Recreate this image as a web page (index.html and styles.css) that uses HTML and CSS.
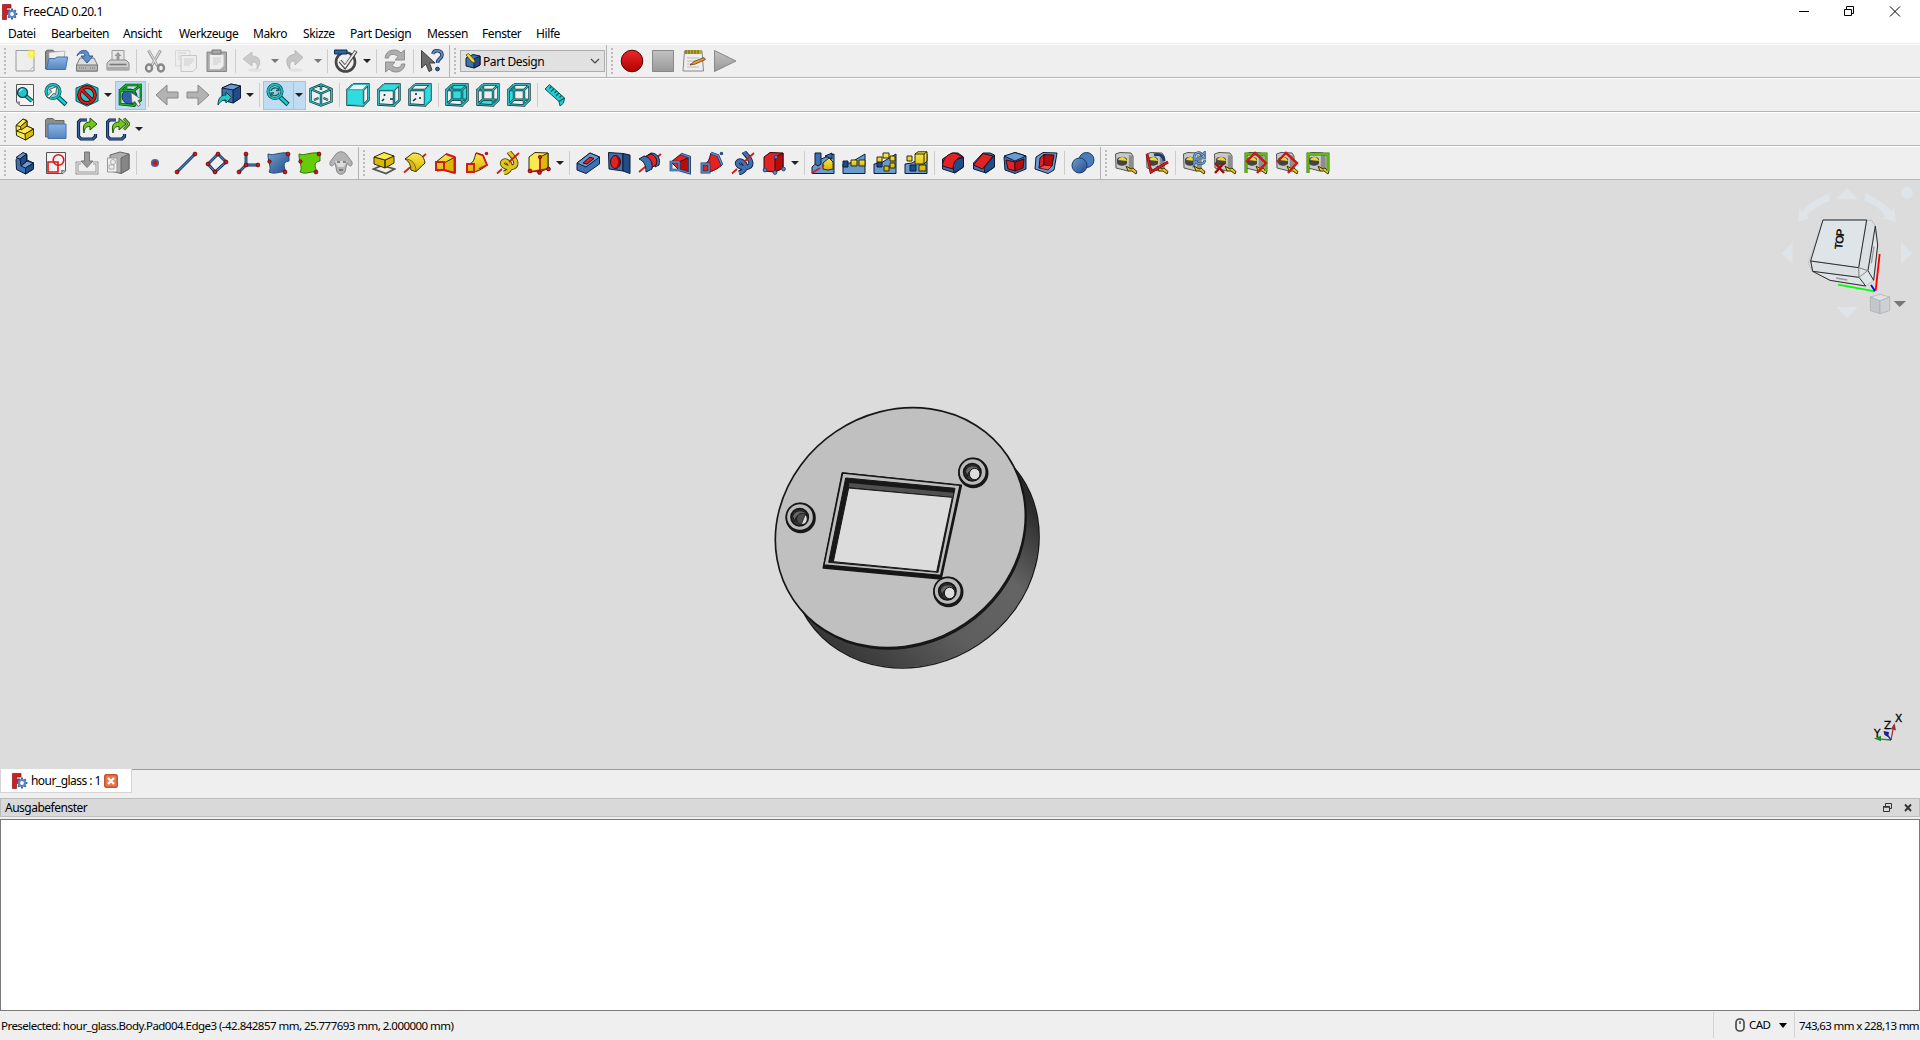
FILE: index.html
```html
<!DOCTYPE html>
<html lang="de">
<head>
<meta charset="utf-8">
<title>FreeCAD 0.20.1</title>
<link rel="stylesheet" href="styles.css">
</head>
<body>
<svg class="defs" width="0" height="0">
<defs>
<linearGradient id="gside" x1="0" y1="1" x2="1" y2="0"><stop offset="0" stop-color="#222"/><stop offset=".2" stop-color="#3c3c3c"/><stop offset=".42" stop-color="#5e5e5e"/><stop offset=".62" stop-color="#646464"/><stop offset=".8" stop-color="#2b2b2b"/><stop offset="1" stop-color="#111"/></linearGradient>
<linearGradient id="gy" x1="0" y1="0" x2="0" y2="1"><stop offset="0" stop-color="#fce94f"/><stop offset="1" stop-color="#d5b400"/></linearGradient>
<linearGradient id="gb" x1="0" y1="0" x2="1" y2="1"><stop offset="0" stop-color="#729fcf"/><stop offset="1" stop-color="#204a87"/></linearGradient>
<linearGradient id="gr" x1="0" y1="0" x2="0" y2="1"><stop offset="0" stop-color="#ef2929"/><stop offset="1" stop-color="#b00000"/></linearGradient>
<linearGradient id="gg" x1="0" y1="0" x2="0" y2="1"><stop offset="0" stop-color="#c2c2c2"/><stop offset="1" stop-color="#999"/></linearGradient>
<linearGradient id="gf" x1="0" y1="0" x2="0" y2="1"><stop offset="0" stop-color="#8db5e2"/><stop offset="1" stop-color="#5585bf"/></linearGradient>
<radialGradient id="glow"><stop offset="0" stop-color="#fffbd0"/><stop offset=".4" stop-color="#fff23c"/><stop offset="1" stop-color="#fff23c" stop-opacity="0"/></radialGradient>
</defs>
<symbol id="logo" viewBox="0 0 16 16"><path d="M.5.5H9V4H4.500V6H8V9.500H4.500V15.500H.5z" fill="#d41c22" stroke="#7c1518" stroke-width=".7"/><path d="M10 4.500v11M4.700 10h10.600M6.200 6.200l7.600 7.600M13.800 6.200l-7.600 7.600" stroke="#365f9c" stroke-width="2"/><circle cx="10" cy="10" r="3" fill="#fff" stroke="#5a86c0" stroke-width="2.200"/></symbol>
<symbol id="new" viewBox="0 0 24 24"><path d="M3 1.500H21V22H3z" fill="#eee" stroke="#999"/><path d="M16 22l5-5" stroke="#bbb"/><circle cx="18.500" cy="5" r="5.500" fill="url(#glow)"/></symbol>
<symbol id="open" viewBox="0 0 24 24"><path d="M1.500 20V2.500L3 1.200H9L10.500 3H20V20z" fill="#8b8d88" stroke="#666"/><path d="M5 3.500L21 2 20 10H5z" fill="#f0f0f0" stroke="#aaa" stroke-width=".7"/><path d="M5 9.500H11L13 8H23.700L21.500 20.500H2.500z" fill="url(#gf)" stroke="#4273ae"/></symbol>
<symbol id="save" viewBox="0 0 24 24"><path d="M5 9H19L22.500 16V22H1.500V16z" fill="#ddd" stroke="#777"/><path d="M1.500 16H22.500V22H1.500z" fill="#b5b5b5" stroke="#777"/><path d="M4 19H12M15 19H20" stroke="#777" stroke-dasharray="1 1"/><path d="M2 7C4 0 14-1 14 7H18L12 14 6 7H10C10 3 5 3 2 7z" fill="#5e8fc9" stroke="#2e5c97"/></symbol>
<symbol id="print" viewBox="0 0 24 24"><path d="M6 1.500H18V12H6z" fill="#e8e8e8" stroke="#999"/><path d="M12 3L15.500 7H13.500V11H10.500V7H8.500z" fill="#999"/><path d="M4 11H20L23 14V21H1V14z" fill="#d0d0d0" stroke="#888"/><path d="M3.500 15.500H20.500" stroke="#777" stroke-width="1.600"/><path d="M1 18H23V21H1z" fill="#aaa"/></symbol>
<symbol id="cut" viewBox="0 0 24 24"><path d="M5.500 1.500L14.500 17M17.500 1.500L8.500 17" stroke="#999" stroke-width="2.800"/><path d="M6 2L14 16M17 2L9 16" stroke="#ddd" stroke-width="1.200"/><ellipse cx="6" cy="19" rx="3" ry="3.500" fill="none" stroke="#888" stroke-width="2.400"/><ellipse cx="18" cy="19" rx="3" ry="3.500" fill="none" stroke="#888" stroke-width="2.400"/></symbol>
<symbol id="copy" viewBox="0 0 24 24"><path d="M1.500 1.500H16V17H1.500z" fill="#eee" stroke="#d8d8d8"/><path d="M7 6.500H22.500V19L19 22.500H7z" fill="#eee" stroke="#c6c6c6"/><path d="M4 4H12M4 7H6M4 10H6M10 10H20M10 12H20M10 14H18M10 16H16" stroke="#d9d9d9" stroke-width="1.300"/></symbol>
<symbol id="paste" viewBox="0 0 24 24"><path d="M2 3H21.500V22.500H2z" fill="#aaa" stroke="#888"/><path d="M4.500 5.500H19V17L15 20.500H4.500z" fill="#eee" stroke="#bbb"/><path d="M7 1H16V5H7z" fill="#aaa" stroke="#777"/><path d="M8 9H16M8 11H16M8 13H16M8 15H13" stroke="#ccc"/></symbol>
<symbol id="undo" viewBox="0 0 24 24"><ellipse cx="13" cy="21" rx="7" ry="1.800" fill="#e2e2e2"/><path d="M1 10L10 3V7C18 7 20 13 15 20 16 14 14 13 10 13V17z" fill="#cbcbcb" stroke="#c0c0c0"/></symbol>
<symbol id="redo" viewBox="0 0 24 24"><g transform="matrix(-1 0 0 1 24 0)"><ellipse cx="13" cy="21" rx="7" ry="1.800" fill="#e2e2e2"/><path d="M6 8.500L14 1.500V5.500C22 5.500 25 13 19 20 20 13 18 12 14 12V16z" fill="#c6c6c6" stroke="#b6b6b6"/></g></symbol>
<symbol id="check" viewBox="0 0 24 24"><circle cx="11.500" cy="13" r="9.500" fill="none" stroke="#444" stroke-width="2.600"/><path d="M.5 1H13V5H.5z" fill="#2d62a5" stroke="#122c50"/><path d="M6 12L11 18 22 2" fill="none" stroke="#444" stroke-width="3.600"/><path d="M6 12L11 17.500 21.500 2.500" fill="none" stroke="#eee" stroke-width="1.800"/></symbol>
<symbol id="refresh" viewBox="0 0 24 24"><g fill="#aeaeae" stroke="#8e8e8e"><path d="M2 9C3 0 14-1 18 4L21.500 1V11H12L15 7.500C11 4 6 5 5.500 9z"/><path d="M22 15C21 24 10 25 6 20L2.500 23V13H12L9 16.500C13 20 18 19 18.500 15z"/></g></symbol>
<symbol id="whats" viewBox="0 0 24 24"><path d="M1.500 1.500V19L6 15 9 22.500 12 21 9.500 14H15z" fill="#6a6c69" stroke="#3f3f3f"/><path d="M13 5C14 0 22 1 22 6 22 10 17.500 9 17.500 14" fill="none" stroke="#203a60" stroke-width="3.600"/><path d="M13 5C14 0 22 1 22 6 22 10 17.500 9 17.500 14" fill="none" stroke="#5e8ac0" stroke-width="1.800"/><circle cx="17.500" cy="20" r="1.900" fill="#3465a4" stroke="#203a60"/></symbol>
<symbol id="pd" viewBox="0 0 16 16"><path class="bl" d="M1 5L8 1.500 15 3V12L9 15 1 13z"/><path class="bd" d="M9 6L15 3V12L9 15z"/><path d="M1 2L3.500 .5 9.500 7 10 10 7 9z" fill="#f2dc42" stroke="#554800" stroke-width=".8"/></symbol>
<symbol id="rec" viewBox="0 0 24 24"><circle cx="12" cy="12" r="10.800" fill="url(#gr)" stroke="#4c0505"/></symbol>
<symbol id="stop" viewBox="0 0 24 24"><path d="M1.500 1.500H22.500V22.500H1.500z" fill="url(#gg)" stroke="#888"/></symbol>
<symbol id="edit" viewBox="0 0 24 24"><path d="M2.500 2H20L21.500 22H1z" fill="#eee" stroke="#888"/><path d="M3 1H20V5H3z" fill="#b8a83a"/><path d="M4 1V5M7 1V5M10 1V5M13 1V5M16 1V5" stroke="#675c14"/><path d="M5 9H17M5 12H16M5 15H9M5 18H17" stroke="#bbb"/><path d="M8 16L12 12.500 22 8.500 23.500 10.500 13.500 15z" fill="#e79a3c" stroke="#6b3c06" stroke-width=".8"/></symbol>
<symbol id="play" viewBox="0 0 24 24"><path d="M1.500 1.500V22.500L23 12z" fill="url(#gg)" stroke="#888"/></symbol>
<symbol id="fit" viewBox="0 0 24 24"><path d="M3.500 1.500H20.500V22.500H7L3.500 19z" fill="#f4f4f4" stroke="#555"/><path d="M3.500 18.500H7V22.500z" fill="#888"/><path d="M13 13L19 18" stroke="#043f42" stroke-width="4"/><path d="M13 13L19 18" stroke="#16d0d2" stroke-width="2.200"/><circle cx="9.500" cy="9.500" r="5" fill="#24c2cc" stroke="#043f42" stroke-width="1.200"/><path d="M6.500 9a3 3 0 0 1 3-2.500" fill="none" stroke="#caffff"/></symbol>
<symbol id="mag" viewBox="0 0 24 24"><path d="M13 13L22 21.500" stroke="#043f42" stroke-width="4.500"/><path d="M13 13L21.500 21" stroke="#16d0d2" stroke-width="2.600"/><circle cx="9" cy="8.500" r="7" fill="#8fd3d9" stroke="#043f42" stroke-width="3"/><circle cx="9" cy="8.500" r="7" fill="none" stroke="#17bdc1" stroke-width="1.800"/></symbol>
<symbol id="fitsel" viewBox="0 0 24 24"><use href="#mag"/><path d="M3 13.500L8 8.500 5.500 6.500 13 3.500 11.500 11.500 9.800 10 5 15z" fill="#fff" stroke="#444" stroke-width=".8"/></symbol>
<symbol id="sync" viewBox="0 0 24 24"><use href="#mag"/><path d="M5 8C5.500 4.500 11 4 12.500 6.500M13 4V7.500H10M13 9.500C12.500 13 7 13.500 5.500 11M5 13.500V10H8" fill="none" stroke="#155c61" stroke-width="1.300"/></symbol>
<symbol id="style" viewBox="0 0 24 24"><path d="M12 .8L23 5V18L12 23.200 1 18V5z" fill="#22c5c8" stroke="#056064"/><circle cx="12" cy="12" r="8" fill="none" stroke="#4a0606" stroke-width="3.800"/><path d="M6.500 6.500L17.500 17.500" stroke="#4a0606" stroke-width="3.600"/><circle cx="12" cy="12" r="8" fill="none" stroke="#d81b1b" stroke-width="2.200"/><path d="M6.500 6.500L17.500 17.500" stroke="#d81b1b" stroke-width="2"/></symbol>
<symbol id="bsel" viewBox="0 0 24 24"><circle cx="11.500" cy="13.500" r="7.500" fill="#2f60a8" stroke="#13305c"/><path d="M2 7.500H16V22.500L2 21zM2 7.500L8 2H23L16 7.500M23 2V17L16 22.500M8 2V7" fill="none" stroke="#063b06" stroke-width="2.600"/><path d="M2 7.500H16V22.500L2 21zM2 7.500L8 2H23L16 7.500M23 2V17L16 22.500M8 2V7" fill="none" stroke="#18b326" stroke-width="1.400"/><path d="M13 9.500L14 20 17 18.500 20 23.500 22.500 22 20 17.500 23 16z" fill="#eee" stroke="#666" stroke-width=".8"/></symbol>
<symbol id="back" viewBox="0 0 24 24"><path d="M1 12L12 2V9H23V15H12V22z" fill="#b3b3b3" stroke="#888"/></symbol>
<symbol id="fwd" viewBox="0 0 24 24"><path d="M23 12L12 2V9H1V15H12V22z" fill="#b3b3b3" stroke="#888"/></symbol>
<symbol id="link" viewBox="0 0 24 24"><path class="bl" d="M5 5L14 1 23.500 3V15L16 20 5 17z"/><path class="bd" d="M16 7L23.500 3V15L16 20z"/><path class="bh" d="M5 5L14 1 23.500 3 16 7z"/><path d="M1 22C1 14 5 12 9 12V9L14.500 14.500 9 20V17C5 17 4 18 1 22z" fill="#27c6cb" stroke="#06474a"/></symbol>
<path id="fr" d="M1.500 7H17V22.500L1.500 21.500zM7 1.500H22.500V17L17 22.500M1.500 7L7 1.500M17 7L22.500 1.500"/>
<path id="hid" d="M7 1.500V16.500L22.500 17M7 16.500L1.500 21.500"/>
<path id="isop" d="M12 1.500L22.500 6V18.500L12 22.500 1.500 18.500V6zM1.500 6L12 10.500 22.500 6M12 10.500V22.500M12 1.500V7M5 17L9.500 15M19 17L14.500 15"/>
<symbol id="iso" viewBox="0 0 24 24"><g class="k"><use href="#isop"/></g><g class="cy"><use href="#isop"/></g></symbol>
<symbol id="vfront" viewBox="0 0 24 24"><g class="k"><use href="#fr"/></g><path class="c" d="M1.500 7H17V22.500L1.500 21.500z"/><path fill="#eafafa" d="M7 2H21L16.500 6.500H3z"/><g class="cy"><use href="#fr"/></g></symbol>
<symbol id="vtop" viewBox="0 0 24 24"><g class="k"><use href="#fr"/><path d="M5 18L7 16M7.500 11V13M13 16H16" stroke-width="1.600"/></g><path class="c" d="M1.500 7L7 1.500H22.500L17 7z"/><g class="cy"><use href="#fr"/></g></symbol>
<symbol id="vright" viewBox="0 0 24 24"><g class="k"><use href="#fr"/><path d="M5 18L8 15.500M8 10V12M12 16V14" stroke-width="1.600"/></g><path class="c" d="M17 7L22.500 1.500V17L17 22.500z"/><g class="cy"><use href="#fr"/></g></symbol>
<symbol id="vrear" viewBox="0 0 24 24"><path class="c" d="M7 1.500H22.500V17L7 16.500z"/><g class="k"><use href="#fr"/><use href="#hid"/></g><g class="cy"><use href="#fr"/><use href="#hid"/></g></symbol>
<symbol id="vbottom" viewBox="0 0 24 24"><path class="c" d="M7 16.500H22.500L17 22.500 1.500 21.500z"/><g class="k"><use href="#fr"/><use href="#hid"/></g><g class="cy"><use href="#fr"/><use href="#hid"/></g></symbol>
<symbol id="vleft" viewBox="0 0 24 24"><path class="c" d="M1.500 7L7 1.500V16.500L1.500 21.500z"/><g class="k"><use href="#fr"/><use href="#hid"/></g><g class="cy"><use href="#fr"/><use href="#hid"/></g></symbol>
<symbol id="ruler" viewBox="0 0 24 24"><path d="M1 6L5.500 1.500 20.500 15 19.500 20 16 23 15 18.500z" fill="#27cbd0" stroke="#06595c"/><path d="M15 18.500L20.500 15M7.500 3.500L5.500 5.500M10 5.500L7 8.500M12.500 8L10.500 10M15 10L12 13M17.500 12.500L15.500 14.500" stroke="#06595c" stroke-width="1.200"/></symbol>
<path id="part" d="M3 8.500L10 2 14 3.500V9L20.500 12V18L12.500 23 3.500 18.500z"/>
<symbol id="ypart" viewBox="0 0 24 24"><use href="#part" class="yl"/><path class="yl" d="M3 8.500L10 2 14 4 7.500 9.500zM3.500 14L14 9 20.500 12 12 17z"/><path class="yd" d="M12 17L20.500 12V18L12.500 23zM7.500 9.500L14 4V9L8 13z"/></symbol>
<symbol id="bpart" viewBox="0 0 24 24"><use href="#part" class="bl"/><path class="bh" d="M3 6.500L10 1.500 13.500 3 7 8zM8 15L14 10 20.500 12 12.500 17z"/><path class="bd" d="M12.500 17L20.500 12V18L12.500 23zM7 8L13.500 3V10L8 15z"/></symbol>
<symbol id="group" viewBox="0 0 24 24"><path d="M1.500 20V3L3 1.500H9L11 3.500H20V20z" fill="#8b8d88" stroke="#666"/><path d="M4 7H22V21.500H4z" fill="url(#gf)" stroke="#4273ae"/></symbol>
<symbol id="ln" viewBox="0 0 24 24"><path d="M12 3H5.500L3.500 5V19.500L6 22H18L20.500 19.500V17" fill="none" stroke="#0b1f3c" stroke-width="3.200"/><path d="M12 3H5.500L3.500 5V19.500L6 22H18L20.500 19.500V17" fill="none" stroke="#3465a4" stroke-width="1.500"/><path class="gn" d="M9 16C7 8 10 5 15 5V1L22 7 15 13V9.500C11 9.500 9.500 11 9 16z"/></symbol>
<symbol id="lng" viewBox="0 0 24 24"><use href="#ln" x="-2"/><path d="M18 1.500L23 7 18 12.500" fill="none" stroke="#3c6d10" stroke-width="3"/><path d="M18 1.500L23 7 18 12.500" fill="none" stroke="#94d14f"/></symbol>
<symbol id="sketch" viewBox="0 0 24 24"><path d="M2.500 1.500H21.500V20L19 22.500H2.500z" fill="#f2f2f2" stroke="#555"/><path d="M17 22.500V19H21.500z" fill="#888"/><path d="M4 11H14V21H4z" fill="none" stroke="#e01515" stroke-width="1.600"/><circle cx="14.500" cy="9" r="5.300" fill="none" stroke="#e01515" stroke-width="1.600"/></symbol>
<symbol id="import" viewBox="0 0 24 24"><path d="M6 12H2V22H22V12H18" fill="none" stroke="#999" stroke-width="3"/><path d="M6 12H2V22H22V12H18" fill="none" stroke="#eee" stroke-width="1"/><path d="M9.500 1H14.500V10H18L12 16.500 6 10H9.500z" fill="#999" stroke="#777"/></symbol>
<symbol id="mapsk" viewBox="0 0 24 24"><path d="M4 4L14 1 23 3V18L15 22.500 4 20z" fill="#b0b0b0" stroke="#666"/><path d="M15 7L23 3V18L15 22.500z" fill="#868686" stroke="#666"/><path d="M1.500 7H11V21H1.500z" fill="#eee" stroke="#999"/><circle cx="7" cy="11" r="2.500" fill="none" stroke="#aaa"/><path d="M3 14H8V18H3z" fill="none" stroke="#aaa"/></symbol>
<symbol id="point" viewBox="0 0 24 24"><circle cx="12" cy="12" r="3.300" fill="#d01515" stroke="#3d6cab" stroke-width="1.600"/></symbol>
<symbol id="line" viewBox="0 0 24 24"><path class="e1" d="M3 21L21 3"/><path class="e2" d="M3 21L21 3"/><g class="d"><circle cx="3" cy="21" r="1.900"/><circle cx="21" cy="3" r="1.900"/></g></symbol>
<symbol id="plane" viewBox="0 0 24 24"><path class="e1" d="M13 3L21 11 10 21 3 13z"/><path class="e2" d="M13 3L21 11 10 21 3 13z"/><g class="d"><circle cx="13" cy="3" r="1.900"/><circle cx="21" cy="11" r="1.900"/><circle cx="10" cy="21" r="1.900"/><circle cx="3" cy="13" r="1.900"/></g></symbol>
<symbol id="cs" viewBox="0 0 24 24"><path class="e1" d="M10 3V14H22M10 14L3 21"/><path class="e2" d="M10 3V14H22M10 14L3 21"/><g class="d"><circle cx="10" cy="3" r="1.900"/><circle cx="10" cy="14" r="1.900"/><circle cx="22" cy="14" r="1.900"/><circle cx="3" cy="21" r="1.900"/></g></symbol>
<path id="bind" d="M1 3C8 5 10 1 22 2L22 10C15 11 17 16 19 21 12 20 8 24 2 21 5 16 1 13 1 3z"/>
<g id="bdots" class="d"><circle cx="21" cy="3" r="1.900"/><circle cx="2.500" cy="10.500" r="1.700"/><circle cx="18" cy="21" r="1.900"/></g>
<symbol id="bb" viewBox="0 0 24 24"><use href="#bind" fill="url(#gb)" stroke="#234b80"/><use href="#bdots"/></symbol>
<symbol id="gbind" viewBox="0 0 24 24"><use href="#bind" fill="#66cc0a" stroke="#32740a"/><use href="#bdots"/></symbol>
<symbol id="clone" viewBox="0 0 24 24"><path d="M7 3C10 0 14 0 17 3L23 11C24 16 20 16 18 12L16 21C14 24 10 24 8 21L6 12C4 16 0 16 1 11z" fill="#b4b4b4" stroke="#888"/><path d="M6 10H18L15 16H9z" fill="#dcdcdc"/><path d="M8 11h3M14 11h3M10 19h4" stroke="#666" stroke-width="1.500"/></symbol>
<symbol id="pad" viewBox="0 0 24 24"><path d="M1.500 18L10 14.500 22.500 18 14 22.500z" fill="#eee" stroke="#555" stroke-width="1.800"/><path class="yd" d="M2 6V13L13 17V9zM13 9L22 5V12L13 17z"/><path class="yl" d="M2 6L12 1.500 22 5 13 9z"/></symbol>
<symbol id="rev" viewBox="0 0 24 24"><path d="M1 21.500L23 3" stroke="#d01c1c" stroke-width="1.800"/><path class="yy" d="M2 8L10 2C17 2 21 5 22 12L13 20.500 8 19C8 14 6 10 2 8z"/><path d="M2 8C9 8 13 13 13 20.500L8 19C8 14 6 10 2 8z" fill="#d9ba0c" stroke="#302b00" stroke-width=".6"/></symbol>
<symbol id="loft" viewBox="0 0 24 24"><path class="yy" d="M2 11L12 3 21 6V22L12 19 3 20z"/><path class="yd" d="M10 12L21 6V22L10 19z"/><path d="M12 3L20.500 6V22L10 19M2 11H10V19H2z" fill="none" stroke="#d41616" stroke-width="1.900"/></symbol>
<symbol id="pipe" viewBox="0 0 24 24"><path class="yy" d="M2 13C9 13 9 8 11 2L18 4 22 14C16 19 13 20 9 21H2z"/><path d="M11 2L18 4.500 22 14 14 18M2 13H9V21H2z" fill="none" stroke="#d41616" stroke-width="1.800"/><circle cx="21.500" cy="2.500" r="1.700" fill="#c01010"/></symbol>
<path id="hx" d="M8 22C15 20 16 14 12 11 8 8 4 12 8 15 13 18 20 17 20 12 19 6 14 3 13 1"/>
<symbol id="helix" viewBox="0 0 24 24"><g fill="none"><use href="#hx" stroke="#453a00" stroke-width="5"/><use href="#hx" stroke="#e1c51b" stroke-width="3.400"/></g><path d="M1 22.500L6 18M13 11L23 2" stroke="#d01c1c" stroke-width="1.800"/></symbol>
<symbol id="ybox" viewBox="0 0 24 24"><path class="yl" d="M2 6L8 1.500 21 2V17L13 21 2 20z"/><path class="yd" d="M13 6L21 2V17L13 21z"/><path d="M13 6V19L3 21M13 19L21 18" stroke="#c51515" stroke-width="1.600" fill="none"/><g class="d"><circle cx="13" cy="6" r="1.700"/><circle cx="3" cy="20" r="1.900"/><circle cx="21.500" cy="18" r="1.900"/><circle cx="12.500" cy="21.500" r="1.900"/></g></symbol>
<symbol id="pocket" viewBox="0 0 24 24"><path class="bl" d="M1 12L14 2 23.500 6V13L10 22.500 1 19z"/><path class="bh" d="M1 12L14 2 23.500 6 10 16z"/><path class="re" d="M7 12L14 6 18 7.500 11 13z"/></symbol>
<symbol id="hole" viewBox="0 0 24 24"><path class="bl" d="M1.500 1.500L16 2.500V20L2 18z"/><path class="bd" d="M16 2.500L23 4V22.500L16 20z"/><ellipse class="re" cx="8.500" cy="11" rx="5" ry="6.500"/><path d="M8.500 5C15 6 15 16 8.500 17 12 14 12 8 8.500 5z" fill="#8e0707"/></symbol>
<symbol id="groove" viewBox="0 0 24 24"><path d="M1 21L23 3" stroke="#d01c1c" stroke-width="1.800"/><path class="bl" d="M13 2C19 2 23 7 21 14L17 16C18 9 15 5 10 4z"/><path class="re" d="M8 5L13 3C18 5 20 9 18 14L13 17z"/><path class="bl" d="M1 8L6 5C12 6 15 11 14 18L8 21C8 14 6 10 1 8z"/></symbol>
<symbol id="sloft" viewBox="0 0 24 24"><path class="re" d="M2 11L12 3 21 6V22L10 19z"/><path class="rd" d="M10 11L21 6V22L10 19z"/><path d="M12 3L20.500 6V22L10 19M2 11H10V19H2z" fill="none" stroke="#163c70" stroke-width="2.700"/><path d="M12 3L20.500 6V22L10 19M2 11H10V19H2z" fill="none" stroke="#5f91cb" stroke-width="1.300"/></symbol>
<symbol id="spipe" viewBox="0 0 24 24"><path class="re" d="M2 13C9 13 9 8 11 2L18 4 22 14C16 19 13 20 9 21H2z"/><path d="M11 2L18 4.500 22 14M2 13H9V21H2z" fill="none" stroke="#123769" stroke-width="2.800"/><path d="M11 2L18 4.500 22 14M2 13H9V21H2z" fill="none" stroke="#5f91cb" stroke-width="1.400"/><circle cx="21.500" cy="2.500" r="1.700" fill="#234b80"/></symbol>
<symbol id="shelix" viewBox="0 0 24 24"><g fill="none"><use href="#hx" stroke="#0b1d38" stroke-width="5"/><use href="#hx" stroke="#3f70b0" stroke-width="3.400"/></g><path d="M1 22.500L6 18M13 11L23 2" stroke="#d01c1c" stroke-width="1.800"/></symbol>
<symbol id="sbox" viewBox="0 0 24 24"><path class="re" d="M2 6L8 1.500 21 2V17L13 21 2 20z"/><path class="rd" d="M13 6L21 2V17L13 21z"/><g fill="#5789c5" stroke="#163c70" stroke-width=".8"><circle cx="14" cy="6" r="1.700"/><circle cx="3" cy="19" r="1.900"/><circle cx="21.500" cy="18" r="1.900"/><circle cx="13" cy="21.500" r="1.900"/></g></symbol>
<path id="ramp" d="M1 13L8 12 23 3V22.500H1z"/>
<symbol id="mirror" viewBox="0 0 24 24"><path class="bh" d="M1 16L10 8 23 3V22.500H1z"/><path class="bl" d="M4 2H10V13L7 15 4 13zM14 5L21 2V8z"/><path class="yy" d="M12 12L18 7 22 11V18L17 19 12 18z"/><path d="M1 22L9 17M11 15.500l2-1.500" stroke="#d01c1c" stroke-width="1.800"/></symbol>
<symbol id="linear" viewBox="0 0 24 24"><use href="#ramp" class="bh"/><path class="bd" d="M1 10H6V16H1z"/><path class="yy" d="M9 9H15V15H9zM17 9H23V15H17z"/></symbol>
<symbol id="polar" viewBox="0 0 24 24"><use href="#ramp" class="bh"/><path class="bd" d="M4 11H9V16H4z"/><path class="yy" d="M4 6H9V11H4zM10 2H16V7H10zM17 5H22V10H17zM17 12H22V17H17zM11 15H16V20H11z"/></symbol>
<symbol id="multi" viewBox="0 0 24 24"><use href="#ramp" class="bh"/><path class="bd" d="M6 14H12V20H6z"/><path class="yy" d="M11 3L14 .8H23V10L20 13H11zM3 5H8V10H3zM15 14H22V20H15z"/><path d="M11 3H20V13M20 3L23 .8" fill="none" stroke="#302b00"/></symbol>
<symbol id="fillet" viewBox="0 0 24 24"><path class="bl" d="M1.500 8L11 2H17L22.500 6V16L14 22 1.500 18z"/><path class="bd" d="M12 14C12 10 17 7 22.500 7V16L13 22z"/><path class="re" d="M1.500 15C1.500 8 7 2 14 2L22 6C16 6 12 11 12 18z"/></symbol>
<symbol id="chamfer" viewBox="0 0 24 24"><path class="bl" d="M1.500 12L11 2H18L22.500 4V16L14 22 1.500 18z"/><path class="bd" d="M12 17L22.500 4V16L13 22z"/><path class="re" d="M1.500 14L11 2.500 21 5 10.500 18z"/></symbol>
<symbol id="draft" viewBox="0 0 24 24"><path class="bl" d="M1 6L12 1.500 23 5V18L12 22.500 2 19z"/><path class="re" d="M3 9L12 11V20L5 18z"/><path class="rd" d="M12 11L21 8 20 17 12 20z"/><path class="bh" d="M1 5L12 1.500 23 5 12 10z"/></symbol>
<symbol id="thick" viewBox="0 0 24 24"><path class="bh" d="M2 6L9 1.500 23 2 20 19 14 22.500 1 18z"/><path class="re" d="M6 7L10 3.500V14L5 17z"/><path class="rd" d="M10 3.500L20 4 18 15 10 14z"/><path d="M5 17L10 14 18 15 14 19z" fill="#ef4c4c" stroke="#520606" stroke-width=".8"/></symbol>
<symbol id="bool" viewBox="0 0 24 24"><circle cx="15.500" cy="9" r="7.500" fill="#4a7cba" stroke="#163c70"/><circle cx="8.500" cy="14.500" r="7.500" fill="url(#gb)" stroke="#163c70"/></symbol>
<symbol id="tape" viewBox="0 0 24 24"><path d="M1.500 3L6 1.500 17 2 19 5V17L14 20 2 17z" fill="#c9cac6" stroke="#555"/><path d="M15 4L19 5V17L14.500 19.500z" fill="#8c8e8a"/><path d="M3 8C5 5 11 5 13 8L13 13C9 16 4 15 3 12z" fill="#444"/><path d="M4 9C6 5 11 5 13 10z" fill="#eed72b"/><path d="M12 15L17 18 19 17 23 20.500 22 23 18 20 14 20z" fill="#e3c51a" stroke="#3d3400"/></symbol>
<symbol id="tang" viewBox="0 0 24 24"><use href="#tape"/><path d="M9 4C16 2 19 6 19 10" fill="none" stroke="#173d70" stroke-width="3"/><path d="M2 3L6 21 23 11" fill="none" stroke="#6c0b0b" stroke-width="2.800"/><path d="M2 3L6 21 23 11" fill="none" stroke="#d81b1b" stroke-width="1.600"/></symbol>
<symbol id="tref" viewBox="0 0 24 24"><use href="#tape"/><path d="M12 6C13 1 18 0 20 4L23 1V7H17M23 9C22 14 16 14 14 10L12 13V8H17" fill="none" stroke="#18406f" stroke-width="2.400"/><path d="M12 6C13 1 18 0 20 4L23 1V7H17M23 9C22 14 16 14 14 10L12 13V8H17" fill="none" stroke="#73a0d3" stroke-width="1.300"/></symbol>
<symbol id="tdel" viewBox="0 0 24 24"><use href="#tape"/><path d="M2 12L11 22M11 12L2 22" stroke="#a20c0c" stroke-width="2.500"/></symbol>
<symbol id="tall" viewBox="0 0 24 24"><use href="#tape"/><path d="M2 22V3H22V20" fill="none" stroke="#2f6a08" stroke-width="3"/><path d="M2 22V3H22V20" fill="none" stroke="#73d216" stroke-width="1.400"/><path class="r1" d="M2 11L11 2 22 12 13 22"/></symbol>
<symbol id="t3d" viewBox="0 0 24 24"><use href="#tape"/><path class="r1" d="M2 11L11 2 22 12 13 22"/></symbol>
<symbol id="tdelta" viewBox="0 0 24 24"><use href="#tape"/><path d="M2 22V3H22V20" fill="none" stroke="#2f6a08" stroke-width="3"/><path d="M2 22V3H22V20" fill="none" stroke="#73d216" stroke-width="1.400"/></symbol>
</svg>

<header class="title"><svg class="logo"><use href="#logo"/></svg><span>FreeCAD 0.20.1</span>
<svg class="winctl" viewBox="0 0 120 22"><g fill="none" stroke="#000"><path d="M4 10.500H14M49.500 8.500H56.500V14.500H49.500zM51.500 8V5.500H58.500V12.500H57M95 5.500L105 15.500M105 5.500L95 15.500"/></g></svg></header>
<nav class="menu"><span>Datei</span><span>Bearbeiten</span><span>Ansicht</span><span>Werkzeuge</span><span>Makro</span><span>Skizze</span><span>Part Design</span><span>Messen</span><span>Fenster</span><span>Hilfe</span></nav>

<div class="row">
<div class="bar"><b><svg><use href="#new"/></svg></b><b><svg><use href="#open"/></svg></b><b><svg><use href="#save"/></svg></b><b><svg><use href="#print"/></svg></b><hr><b><svg><use href="#cut"/></svg></b><b><svg><use href="#copy"/></svg></b><b><svg><use href="#paste"/></svg></b><hr><b class="dd dim"><svg><use href="#undo"/></svg></b><b class="dd dim"><svg><use href="#redo"/></svg></b><hr><b class="dd"><svg><use href="#check"/></svg></b><hr><b><svg><use href="#refresh"/></svg></b><hr><b><svg><use href="#whats"/></svg></b></div>
<div class="bar"><div class="combo"><svg class="pd"><use href="#pd"/></svg><span>Part Design</span><svg class="chev" viewBox="0 0 10 6"><path d="M1 1L5 5 9 1" fill="none" stroke="#444" stroke-width="1.200"/></svg></div></div>
<div class="bar"><b><svg><use href="#rec"/></svg></b><b><svg><use href="#stop"/></svg></b><b><svg><use href="#edit"/></svg></b><b><svg><use href="#play"/></svg></b></div>
</div>
<div class="row">
<div class="bar"><b><svg><use href="#fit"/></svg></b><b><svg><use href="#fitsel"/></svg></b><b class="dd"><svg><use href="#style"/></svg></b><b class="on"><svg><use href="#bsel"/></svg></b><hr><b><svg><use href="#back"/></svg></b><b><svg><use href="#fwd"/></svg></b><b class="dd"><svg><use href="#link"/></svg></b><hr><b class="dd on split"><svg><use href="#sync"/></svg></b><b><svg><use href="#iso"/></svg></b><hr><b><svg><use href="#vfront"/></svg></b><b><svg><use href="#vtop"/></svg></b><b><svg><use href="#vright"/></svg></b><hr><b><svg><use href="#vrear"/></svg></b><b><svg><use href="#vbottom"/></svg></b><b><svg><use href="#vleft"/></svg></b><hr><b><svg><use href="#ruler"/></svg></b></div>
</div>
<div class="row">
<div class="bar"><b><svg><use href="#ypart"/></svg></b><b><svg><use href="#group"/></svg></b><b><svg><use href="#ln"/></svg></b><b class="dd"><svg><use href="#lng"/></svg></b></div>
</div>
<div class="row">
<div class="bar"><b><svg><use href="#bpart"/></svg></b><b><svg><use href="#sketch"/></svg></b><b><svg><use href="#import"/></svg></b><b><svg><use href="#mapsk"/></svg></b><hr><b><svg><use href="#point"/></svg></b><b><svg><use href="#line"/></svg></b><b><svg><use href="#plane"/></svg></b><b><svg><use href="#cs"/></svg></b><b><svg><use href="#bb"/></svg></b><b><svg><use href="#gbind"/></svg></b><b><svg><use href="#clone"/></svg></b></div>
<div class="bar"><b><svg><use href="#pad"/></svg></b><b><svg><use href="#rev"/></svg></b><b><svg><use href="#loft"/></svg></b><b><svg><use href="#pipe"/></svg></b><b><svg><use href="#helix"/></svg></b><b class="dd"><svg><use href="#ybox"/></svg></b><hr><b><svg><use href="#pocket"/></svg></b><b><svg><use href="#hole"/></svg></b><b><svg><use href="#groove"/></svg></b><b><svg><use href="#sloft"/></svg></b><b><svg><use href="#spipe"/></svg></b><b><svg><use href="#shelix"/></svg></b><b class="dd"><svg><use href="#sbox"/></svg></b><hr><b><svg><use href="#mirror"/></svg></b><b><svg><use href="#linear"/></svg></b><b><svg><use href="#polar"/></svg></b><b><svg><use href="#multi"/></svg></b><hr><b><svg><use href="#fillet"/></svg></b><b><svg><use href="#chamfer"/></svg></b><b><svg><use href="#draft"/></svg></b><b><svg><use href="#thick"/></svg></b><hr><b><svg><use href="#bool"/></svg></b></div>
<div class="bar"><b><svg><use href="#tape"/></svg></b><b><svg><use href="#tang"/></svg></b><hr><b><svg><use href="#tref"/></svg></b><b><svg><use href="#tdel"/></svg></b><b><svg><use href="#tall"/></svg></b><b><svg><use href="#t3d"/></svg></b><b><svg><use href="#tdelta"/></svg></b></div>
</div>

<svg class="view" viewBox="0 180 1920 589">
<!-- solid body -->
<g transform="translate(760 390) scale(.33333)" stroke="#161616" stroke-width="5" stroke-linejoin="round">
<ellipse cx="0" cy="0" rx="385" ry="345" transform="translate(464 476) rotate(-33.900)" fill="none"/>
<clipPath id="low"><ellipse cx="0" cy="0" rx="384" ry="344" transform="translate(464 476) rotate(-33.900)"/></clipPath>
<g clip-path="url(#low)"><path d="M40 80H860V860H40z" fill="url(#gside)" stroke="none"/></g>
<ellipse cx="0" cy="0" rx="386" ry="346" transform="translate(424 418) rotate(-33.900)" fill="#333"/>
<ellipse cx="0" cy="0" rx="387" ry="347" transform="translate(421 413) rotate(-33.900)" fill="#c0c0c0"/>
<path d="M247 249L604 286 543 567 190 534z" fill="#161616"/>
<path d="M248 249L600 286 542 556 192 525z" fill="#bdbdbd" stroke-width="4"/>
<path d="M257 264L585 295 534 547 206 517z" fill="#181818" stroke-width="3"/>
<path d="M268 279L580 308 578 321 266 292z" fill="#505050" stroke="none"/>
<path d="M266 294L577 322 530 545 220 515z" fill="#dcdcdc" stroke-width="3"/>
<g id="screw"><circle cx="640" cy="249" r="43" fill="#2a2a2a"/><circle cx="638" cy="246" r="41" fill="#bababa"/><circle cx="637" cy="247" r="26" fill="#343434"/><path d="M616 244A23 22 0 0 1 659 240A25 24 0 0 0 622 260z" fill="#666" stroke-width="3"/><ellipse cx="644" cy="252" rx="16" ry="17" fill="#dcdcdc" stroke-width="3"/></g>
<use href="#screw" x="-75" y="357"/>
<use href="#screw" x="-518" y="135"/>
<path d="M110 388A17 18 0 0 1 136 373L124 404A18 18 0 0 1 110 388z" fill="#4b4b4b" stroke-width="2"/>
</g>
<!-- navigation cube -->
<g transform="translate(1760) scale(.33333)">
<g fill="#dfe4e8"><path d="M228 598L261 563 294 598zM228 921L261 955 294 921zM65 760L98 727V793zM456 760L423 727V793zM206 582L210 603C180 613 155 630 140 648L148 655 113 665 119 621 125 635C145 612 175 592 206 582zM317 582L313 603C343 613 368 630 376 650L368 655 408 665 402 621 396 635C375 612 348 592 317 582z"/><circle cx="441" cy="579" r="18"/></g>
<path d="M189 660L320 660 345 677 354 735 341 841 317 858 210 841 158 814 145 790z" fill="#dfe4e8" stroke="#bfc3c6" stroke-width="3"/>
<path d="M320 661L335 661 346 678 323 812 296 803zM152 783L296 803 297 832 158 814z" fill="#dbe0e4" stroke="#aaa" stroke-width="2"/>
<g fill="none" stroke="#2c2c2c" stroke-width="3"><path d="M189 660H320L296 803 152 783zM346 678L324 812 341 841 353 735zM158 814L297 832 317 858 210 841zM152 783L158 814"/><path d="M296 803L323 812 297 832z" stroke="#888"/><path d="M342 740L334 790M228 834L262 840" stroke="#999" stroke-width="4"/></g>
<text x="0" y="0" transform="translate(247 749) rotate(-84)" class="top">TOP</text>
<g fill="none" stroke-width="5.500"><path d="M347 872L359 762" stroke="#f00"/><path d="M345 874L234 854" stroke="#0f0"/><path d="M345 873L333 855" stroke="#00d"/></g>
<g stroke="#a6acb1" stroke-width="2"><path d="M331 891L360 883 389 891 360 903z" fill="#dde2e6"/><path d="M331 891L360 903V941L331 932z" fill="#c2c7cb"/><path d="M360 903L389 891V932L360 941z" fill="#ccd1d5"/></g>
<path d="M401 903H438L419 921z" fill="#777"/>
</g>
<!-- axis cross -->
<g stroke-width="1.300"><path d="M1891 740L1893.500 727" stroke="#a33"/><path d="M1891 740L1878 738.800" stroke="#2a8a2a"/><path d="M1891 740L1886 733" stroke="#228"/></g>
<path d="M1894.500 723L1896 730.500 1891 729z" fill="#a02c30"/><path d="M1874 738.500L1881 735.800V741.300z" fill="#1f8b25"/><path d="M1883.500 731L1889 732 1888 737 1884.500 735z" fill="#1f1f8f"/>
<g class="axis"><text x="1895" y="722">X</text><text x="1884" y="729">Z</text><text x="1874" y="737">Y</text></g>
</svg>

<div class="tabs"><div class="tab"><svg class="logo"><use href="#logo"/></svg><span>hour_glass : 1</span><svg class="close" viewBox="0 0 14 14"><rect x=".7" y=".7" width="12.600" height="12.600" rx="1.500" fill="#e8764f" stroke="#c9502c" stroke-width="1.400"/><path d="M4 4L10 10M10 4L4 10" stroke="#fff" stroke-width="2.200"/></svg></div></div>
<div class="dockhead"><span>Ausgabefenster</span><svg viewBox="0 0 36 14"><g fill="none" stroke="#333"><path d="M3.500 5V2.500H9.500V7.500H8M1.500 5.500H7.500V10.500H1.500z"/><path d="M1 6H8" stroke-width="1.500"/><path d="M23 3.500L29 10M29 3.500L23 10" stroke-width="1.900"/></g></svg></div>
<div class="output"></div>
<footer class="status"><span class="msg">Preselected: hour_glass.Body.Pad004.Edge3 (-42.842857 mm, 25.777693 mm, 2.000000 mm)</span>
<div class="cad"><svg viewBox="0 0 10 14"><rect x="1" y="1" width="8" height="12" rx="3.500" fill="none" stroke="#444" stroke-width="1.600"/><path d="M5 3V6" stroke="#444" stroke-width="1.400"/></svg><span>CAD</span></div><div class="size">743,63 mm x 228,13 mm</div></footer>
</body>
</html>
```

FILE: styles.css
```css
* { box-sizing: border-box; }
body {
  margin: 0;
  width: 1920px;
  height: 1040px;
  overflow: hidden;
  display: flex;
  flex-direction: column;
  background: #efefef;
  color: #000;
  font: 12px/16px "Noto Sans", "Open Sans", sans-serif;
  letter-spacing: -0.4px;
}
body > * { flex-shrink: 0; }
svg { display: block; flex: none; }
.defs { position: absolute; }
.logo { width: 16px; height: 16px; }

.title { height: 22px; background: #fff; display: flex; align-items: center; padding: 2px 5px 0 2px; gap: 5px; }
.title span { flex: 1; }
.winctl { width: 120px; height: 22px; }
.menu {
  height: 22px;
  background: #fff;
  border-bottom: 1px solid #ececec;
  display: grid;
  grid-template-columns: 43px 72px 56px 74px 50px 47px 77px 55px 54px 40px;
  padding: 4px 0 0 8px;
  white-space: nowrap;
}

.row { height: 34px; display: flex; border-top: 1px solid #fff; border-bottom: 1px solid #b4b4b4; }
.bar {
  display: flex;
  align-items: center;
  padding: 0 1px 0 10px;
  border-right: 1px solid #b4b4b4;
  background: repeating-linear-gradient(#bcbcbc 0 2px, #efefef 2px 4px) 4px 3px / 2px 26px no-repeat;
}
.bar:last-child { border-right: 0; }
.bar b { width: 31px; height: 29px; padding: 2px 3px; display: flex; align-items: center; flex: none; }
.bar b svg { width: 24px; height: 24px; }
.bar b.dd { width: 43px; }
.bar b.dd::after {
  content: "";
  margin-left: 5px;
  border: 4px solid transparent;
  border-top-color: #222;
  border-bottom: 0;
}
.bar b.dim::after { border-top-color: #777; }
.bar b.on { background: #c0dcf3; box-shadow: inset 0 0 0 1px #90c8f6; }
.bar b.split { background: linear-gradient(#90c8f6, #90c8f6) 30px 0 / 1px 100% no-repeat #c0dcf3; }
.bar hr { width: 1px; height: 24px; margin: 0 3px 0 2px; border: 0; background: #cdcdcd; flex: none; }

.combo { width: 145px; height: 22px; border: 1px solid #adadad; background: #e1e1e1; display: flex; align-items: center; padding: 0 4px; gap: 2px; }
.combo span { flex: 1; padding-top: 1px; }
.pd { width: 16px; height: 16px; }
.chev { width: 10px; height: 6px; }

/* toolbar artwork */
.bl { fill: #3f70b0; stroke: #0b1d38; }
.bd { fill: #234b85; stroke: #0b1d38; }
.bh { fill: #6a9ad0; stroke: #0b1d38; }
.yl { fill: #fce94f; stroke: #302b00; }
.yy { fill: url(#gy); stroke: #302b00; }
.yd { fill: #d9ba0c; stroke: #302b00; }
.re { fill: #e32222; stroke: #330a14; }
.rd { fill: #b90b0b; stroke: #330a14; }
.gn { fill: #73c61a; stroke: #244f08; }
.c { fill: #2fdde0; }
.k { fill: none; stroke: #053538; stroke-width: 2.400; }
.cy { fill: none; stroke: #35b9be; stroke-width: 1.100; }
.e1 { fill: none; stroke: #0f284b; stroke-width: 2.800; }
.e2 { fill: none; stroke: #477bba; stroke-width: 1.400; }
.d { fill: #dc1414; stroke: #5c0808; stroke-width: .8; }
.r1 { fill: none; stroke: #c81818; stroke-width: 2.400; }

.view { width: 1920px; height: 589px; background: #dcdcdc; }
.top { font: bold 34px "Liberation Sans", sans-serif; fill: #111; letter-spacing: -4px; }
.axis { font: 10.500px "DejaVu Sans", sans-serif; stroke: #000; stroke-width: .3; }

.tabs { height: 29px; border-top: 1px solid #9d9d9d; }
.tab { width: 132px; height: 24px; margin-top: -1px; background: #fff; border: 1px solid #d5d5d5; border-top: 0; display: flex; align-items: center; padding-left: 11px; }
.tab span { width: 76px; padding-left: 3px; white-space: nowrap; letter-spacing: -0.55px; }
.tab .close { width: 14px; height: 14px; }
.dockhead { height: 19px; background: #d9d9d9; border: 1px solid #bdbdbd; display: flex; align-items: center; justify-content: space-between; padding: 0 1px 0 4px; letter-spacing: -0.5px; }
.dockhead svg { width: 36px; height: 14px; }
.output { height: 192px; margin-top: 2px; background: #fff; border: 1px solid #7a7a7a; }
.status { height: 29px; display: flex; align-items: stretch; font-size: 11.500px; line-height: 28px; letter-spacing: -0.53px; padding-top: 1px; white-space: nowrap; }
.msg { flex: 1; padding-left: 1px; line-height: 28px; }
.cad { width: 85px; display: flex; align-items: center; border-left: 1px solid #d3d3d3; padding-left: 21px; margin-bottom: 2px; }
.cad svg { width: 10px; height: 14px; margin-right: 4px; }
.cad span { width: 30px; }
.cad::after { content: ""; border: 4px solid transparent; border-top: 5px solid #000; border-bottom: 0; }
.size { width: 122px; border-left: 1px solid #d3d3d3; margin-left: -4px; margin-right: 4px; padding-left: 4px; margin-bottom: 2px; line-height: 28px; letter-spacing: -0.62px; }
```
